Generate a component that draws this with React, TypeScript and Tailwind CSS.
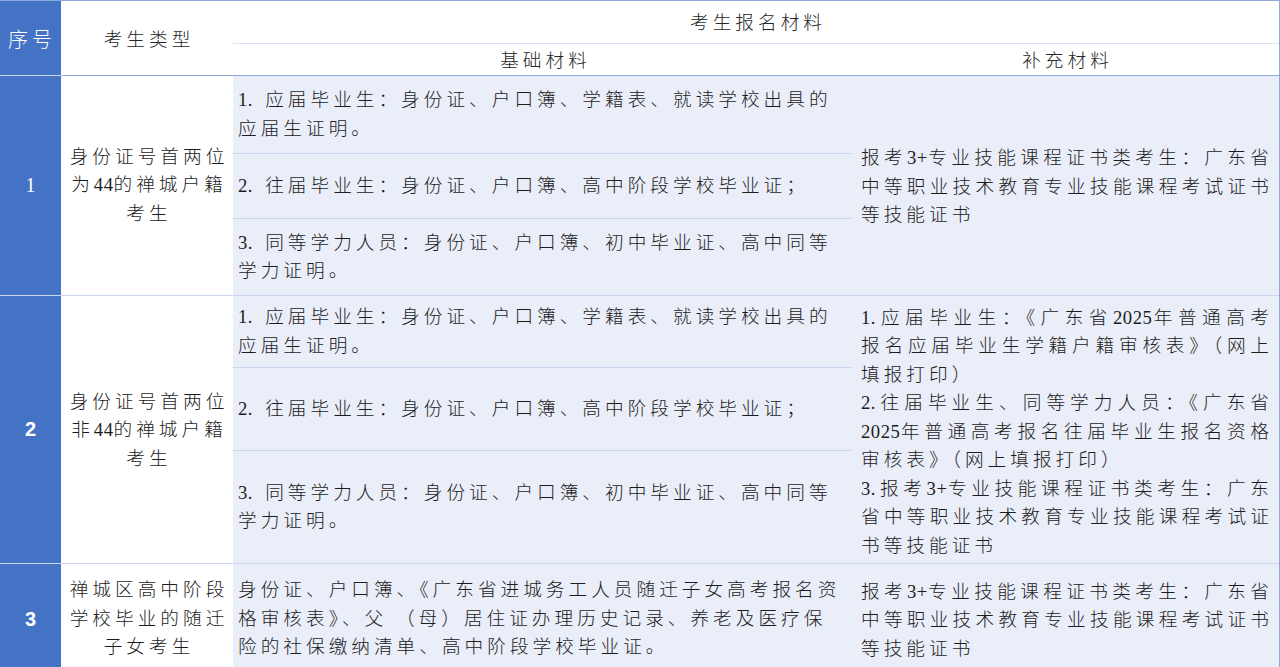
import React from "react";

const FONT = "[font-family:'Liberation_Serif','Noto_Sans_CJK_SC',serif]";

function T({ s }: { s: string }) {
  const parts = s.split(/([0-9+]+)/);
  return (
    <>
      {parts.map((p, i) =>
        /^[0-9+]+$/.test(p) ? (
          <span key={i} className="tracking-[0.5px]">
            {p}
          </span>
        ) : (
          <React.Fragment key={i}>{p}</React.Fragment>
        )
      )}
    </>
  );
}

function Lines({ lines, justify = false }: { lines: string[]; justify?: boolean }) {
  return (
    <div>
      {lines.map((l, i) => (
        <div
          key={i}
          className={
            "whitespace-nowrap " +
            (justify && i < lines.length - 1 ? "text-justify [text-align-last:justify]" : "")
          }
        >
          <T s={l} />
        </div>
      ))}
    </div>
  );
}

function CenterLines({ lines }: { lines: string[] }) {
  return (
    <div className="text-center">
      {lines.map((l, i) => (
        <div key={i} className="whitespace-nowrap pl-[4px]">
          <T s={l} />
        </div>
      ))}
    </div>
  );
}

type Sub = { h: string; lines: string[] };

function Row({
  num,
  numClass,
  type,
  subs,
  extra,
  last = false,
}: {
  num: string;
  numClass: string;
  type: string[];
  subs: Sub[];
  extra: string[];
  last?: boolean;
}) {
  return (
    <div className="flex">
      <div
        className={
          "w-[61px] shrink-0 bg-[#4472C4] flex items-center justify-center text-white " +
          (last ? "" : "border-b border-[#CDD5E6]")
        }
      >
        <span className={numClass}>{num}</span>
      </div>
      <div
        className={
          "w-[172px] shrink-0 bg-white flex items-center justify-center " +
          (last ? "" : "border-b border-[#CAD6F0]")
        }
      >
        <CenterLines lines={type} />
      </div>
      <div className="w-[619px] shrink-0 flex flex-col bg-[#EAEEF9]">
        {subs.map((s, i) => (
          <div
            key={i}
            className={
              s.h +
              " flex items-center pl-[5px] " +
              (last && i === subs.length - 1 ? "" : "border-b border-[#CAD6F0]")
            }
          >
            <Lines lines={s.lines} />
          </div>
        ))}
      </div>
      <div
        className={
          "flex-1 bg-[#EAEEF9] flex items-center pl-[9px] pr-[6px] pt-[3px] " +
          (last ? "" : "border-b border-[#CAD6F0]")
        }
      >
        <div className="w-full">
          <Lines lines={extra} justify />
        </div>
      </div>
    </div>
  );
}

export default function App() {
  const basic1: Sub[] = [
    {
      h: "h-[78px]",
      lines: ["1. 应届毕业生：身份证、户口簿、学籍表、就读学校出具的", "应届生证明。"],
    },
    { h: "h-[65px]", lines: ["2. 往届毕业生：身份证、户口簿、高中阶段学校毕业证；"] },
    {
      h: "h-[77px]",
      lines: ["3. 同等学力人员：身份证、户口簿、初中毕业证、高中同等", "学力证明。"],
    },
  ];
  const basic2: Sub[] = [
    {
      h: "h-[72px]",
      lines: ["1. 应届毕业生：身份证、户口簿、学籍表、就读学校出具的", "应届生证明。"],
    },
    { h: "h-[83px]", lines: ["2. 往届毕业生：身份证、户口簿、高中阶段学校毕业证；"] },
    {
      h: "h-[113px]",
      lines: ["3. 同等学力人员：身份证、户口簿、初中毕业证、高中同等", "学力证明。"],
    },
  ];
  const basic3: Sub[] = [
    {
      h: "h-[110px]",
      lines: [
        "身份证、户口簿、《广东省进城务工人员随迁子女高考报名资",
        "格审核表》、父 （母）居住证办理历史记录、养老及医疗保",
        "险的社保缴纳清单、高中阶段学校毕业证。",
      ],
    },
  ];
  const skill = [
    "报考3+专业技能课程证书类考生：广东省",
    "中等职业技术教育专业技能课程考试证书",
    "等技能证书",
  ];
  const extra2 = [
    "1.应届毕业生：《广东省2025年普通高考",
    "报名应届毕业生学籍户籍审核表》（网上",
    "填报打印）",
  ];
  const extra2b = [
    "2.往届毕业生、同等学力人员：《广东省",
    "2025年普通高考报名往届毕业生报名资格",
    "审核表》（网上填报打印）",
  ];
  const extra2c = [
    "3.报考3+专业技能课程证书类考生：广东",
    "省中等职业技术教育专业技能课程考试证",
    "书等技能证书",
  ];

  return (
    <div
      className={
        "w-[1280px] h-[667px] overflow-hidden bg-white text-[#1c1c1c] text-[18.67px] leading-[28.5px] tracking-[4px] [font-weight:300] " +
        FONT
      }
    >
      <div className="border-t border-r border-[#8EA9DB]">
        {/* header */}
        <div className="flex h-[75px]">
          <div className="w-[61px] shrink-0 bg-[#4472C4] border-b border-[#CDD5E6] flex items-center justify-center text-white text-[20px] pt-[5px] pl-[3px]">
            序号
          </div>
          <div className="w-[172px] shrink-0 border-b border-[#8EA9DB] flex items-center justify-center pt-[5px] pl-[4px] text-[#262626]">
            考生类型
          </div>
          <div className="flex-1 flex flex-col border-b border-[#8EA9DB] text-[#262626]">
            <div className="h-[46px] border-b border-[#D9E1F2] flex items-center justify-center pl-[4px] pt-[3px]">
              考生报名材料
            </div>
            <div className="flex-1 flex">
              <div className="w-[619px] shrink-0 flex items-center justify-center pl-[6px] pt-[3px]">
                基础材料
              </div>
              <div className="flex-1 flex items-center justify-center pl-[4px] pt-[3px]">
                补充材料
              </div>
            </div>
          </div>
        </div>

        <Row
          num="1"
          numClass="text-[20px] [font-family:'Liberation_Serif',serif] tracking-normal"
          type={["身份证号首两位", "为44的禅城户籍", "考生"]}
          subs={basic1}
          extra={skill}
        />
        <div className="flex">
          <div className="w-[61px] shrink-0 bg-[#4472C4] flex items-center justify-center text-white border-b border-[#CDD5E6]">
            <span className="text-[20px] font-bold [font-family:'Liberation_Sans',sans-serif] tracking-normal">
              2
            </span>
          </div>
          <div className="w-[172px] shrink-0 bg-white flex items-center justify-center border-b border-[#CAD6F0] pt-[2px]">
            <CenterLines lines={["身份证号首两位", "非44的禅城户籍", "考生"]} />
          </div>
          <div className="w-[619px] shrink-0 flex flex-col bg-[#EAEEF9]">
            {basic2.map((s, i) => (
              <div key={i} className={s.h + " flex items-center pl-[5px] border-b border-[#CAD6F0]"}>
                <Lines lines={s.lines} />
              </div>
            ))}
          </div>
          <div className="flex-1 bg-[#EAEEF9] flex items-center pl-[9px] pr-[6px] border-b border-[#CAD6F0] pt-[5px]">
            <div className="w-full">
              <Lines lines={extra2} justify />
              <Lines lines={extra2b} justify />
              <Lines lines={extra2c} justify />
            </div>
          </div>
        </div>
        <Row
          num="3"
          numClass="text-[20px] font-bold [font-family:'Liberation_Sans',sans-serif] tracking-normal"
          type={["禅城区高中阶段", "学校毕业的随迁", "子女考生"]}
          subs={basic3}
          extra={skill}
          last
        />
      </div>
    </div>
  );
}
